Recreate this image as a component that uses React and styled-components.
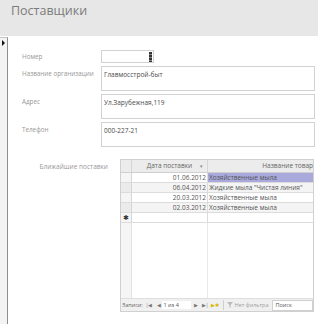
import React from 'react';
import styled, { createGlobalStyle } from 'styled-components';

const Global = createGlobalStyle`
  body {
    margin: 0;
    background: #fff;
    font-family: 'Open Sans', 'Noto Sans', sans-serif;
  }
`

const Page = styled.div`
  width: 333px;
  height: 324px;
  overflow: hidden;
  background: #fff;
`

const Header = styled.div`
  width: 307px;
  height: 36px;
  background: #e7e7e7;
  padding-left: 11px;
  box-sizing: content-box;
`

const Title = styled.h1`
  margin: 0;
  font-size: 12.5px;
  font-weight: 400;
  line-height: 22px;
  color: #7b7b7b;
`

const Body = styled.div`
  display: flex;
  height: 288px;
`

const Selector = styled.div`
  width: 7px;
  margin-top: 1px;
  background: #f3f3f3;
  border-right: 1px solid #8e8e8e;
  border-top: 1px solid #c4c4c4;
  position: relative;
`

const Arrow = styled.span`
  position: absolute;
  left: 2px;
  top: 2px;
  width: 0;
  height: 0;
  border-top: 3px solid transparent;
  border-bottom: 3px solid transparent;
  border-left: 3px solid #111;
`

const Detail = styled.div`
  flex: 1;
  padding: 14px 0 0 14px;
`

const Fields = styled.div`
  display: grid;
  grid-template-columns: 79px 214px;
  row-gap: 3px;
`

const Label = styled.div`
  font-size: 6.3px;
  color: #989898;
  padding-top: ${p => p.$pad || 3}px;
  white-space: nowrap;
`

const Box = styled.div`
  height: ${p => p.$h}px;
  width: ${p => p.$w || 214}px;
  box-sizing: border-box;
  border: 1px solid #d2d2d2;
  font-size: 6.5px;
  color: #4a4a4a;
  padding: 3px 2px;
  position: relative;
`

const Caret = styled.span`
  position: absolute;
  right: 1px;
  top: 1px;
  width: 3px;
  height: 10px;
  background: repeating-linear-gradient(#333 0 2px, #888 2px 3px);
`

const SubRow = styled.div`
  display: flex;
  margin-top: 12px;
`

const SubLabel = styled.div`
  width: 86px;
  text-align: right;
  font-size: 6.5px;
  color: #989898;
  padding-top: 3px;
  margin-right: 12px;
`

const Sub = styled.div`
  width: 194px;
  height: 153px;
  border: 1px solid #d0d0d0;
  box-sizing: border-box;
  display: flex;
  flex-direction: column;
  overflow: hidden;
  background: #fff;
`

const Grid = styled.div`
  flex: 1;
  display: grid;
  grid-template-columns: 11px 76px 164px;
  grid-auto-rows: 10px;
  grid-template-rows: 13px;
  align-content: start;
  width: 251px;
  background:
    linear-gradient(#e2e2e2, #e2e2e2) 10px 0 / 1px 100% no-repeat,
    linear-gradient(#e8e8e8, #e8e8e8) 86px 0 / 1px 100% no-repeat,
    linear-gradient(#f5f5f5, #f5f5f5) 0 0 / 10px 100% no-repeat;
`

const Head = styled.div`
  background: #ececec;
  border-bottom: 1px solid #cfcfcf;
  border-right: 1px solid #d6d6d6;
  font-size: 6.5px;
  color: #666;
  line-height: 12px;
  text-align: center;
  position: relative;
`

const Sort = styled.span`
  position: absolute;
  right: 4px;
  top: 0;
  font-size: 5px;
  color: #888;
`

const Cell = styled.div`
  font-size: 6.5px;
  line-height: 9px;
  color: #555;
  border-bottom: 1px solid #dcdcdc;
  border-right: 1px solid #dcdcdc;
  background: ${p => (p.$sel ? '#a9a9dc' : p.$alt ? '#f4f4f4' : '#fff')};
  text-align: ${p => (p.$right ? 'right' : 'left')};
  padding: 0 1px;
  white-space: nowrap;
  overflow: hidden;
`

const RowSel = styled.div`
  background: ${p => (p.$alt ? '#ebebeb' : '#f5f5f5')};
  border-bottom: 1px solid #dcdcdc;
  border-right: 1px solid #d6d6d6;
  font-size: 7px;
  line-height: 9px;
  color: #333;
  text-align: center;
`

const Nav = styled.div`
  height: 12px;
  display: flex;
  align-items: center;
  background: #f0f0f0;
  border-top: 1px solid #dedede;
  font-size: 5.5px;
  color: #666;
  padding-left: 1px;
  white-space: nowrap;
`

const NavBtn = styled.span`
  margin: 0 ${p => p.$m || 2}px;
  color: ${p => p.$c || '#777'};
  font-size: 5px;
`

const Counter = styled.span`
  background: #fff;
  padding: 0 12px 0 2px;
  color: #555;
`

const Sep = styled.span`
  width: 1px;
  height: 10px;
  background: #cfcfcf;
  margin: 0 3px;
`

const Filter = styled.span`
  color: #a0a0a0;
  display: flex;
  align-items: center;
  gap: 2px;
`

const Search = styled.span`
  background: #fff;
  border: 1px solid #d0d0d0;
  height: 9px;
  line-height: 9px;
  padding: 0 3px;
  width: 34px;
  margin-left: 3px;
  color: #555;
`

const rows = [
  ['01.06.2012', 'Хозяйственные мыла'],
  ['06.04.2012', 'Жидкие мыла "Чистая линия"'],
  ['20.03.2012', 'Хозяйственные мыла'],
  ['02.03.2012', 'Хозяйственные мыла'],
]

export default function App() {
  return (
    <Page>
      <Global />
      <Header>
        <Title>Поставщики</Title>
      </Header>
      <Body>
        <Selector>
          <Arrow />
        </Selector>
        <Detail>
          <Fields>
            <Label $pad={2}>Номер</Label>
            <Box $h={13} $w={53}><Caret /></Box>
            <Label>Название организации</Label>
            <Box $h={25}>Главмосстрой-быт</Box>
            <Label>Адрес</Label>
            <Box $h={25}>Ул.Зарубежная,119</Box>
            <Label>Телефон</Label>
            <Box $h={25}>000-227-21</Box>
          </Fields>
          <SubRow>
            <SubLabel>Ближайшие поставки</SubLabel>
            <Sub>
              <Grid>
                <Head />
                <Head>Дата поставки<Sort>▾</Sort></Head>
                <Head>Название товара</Head>
                {rows.map((r, i) => (
                  <React.Fragment key={i}>
                    <RowSel $alt={i % 2 === 1} />
                    <Cell $right $alt={i % 2 === 1}>{r[0]}</Cell>
                    <Cell $sel={i === 0} $alt={i % 2 === 1}>{r[1]}</Cell>
                  </React.Fragment>
                ))}
                <RowSel>✱</RowSel>
                <Cell />
                <Cell />
              </Grid>
              <Nav>
                Записи:
                <NavBtn $m={3}>|◀</NavBtn>
                <NavBtn $m={1}>◀</NavBtn>
                <Counter>1 из 4</Counter>
                <NavBtn $m={3}>▶</NavBtn>
                <NavBtn $m={1}>▶|</NavBtn>
                <NavBtn $m={1} $c="#d8b800">▶✱</NavBtn>
                <Sep />
                <Filter>
                  <svg width="6" height="6" viewBox="0 0 6 6">
                    <path d="M0 0 H6 L3.6 3 V6 L2.4 5 V3 Z" fill="#bbb" />
                  </svg>
                  Нет фильтра
                </Filter>
                <Search>Поиск</Search>
              </Nav>
            </Sub>
          </SubRow>
        </Detail>
      </Body>
    </Page>
  )
}
